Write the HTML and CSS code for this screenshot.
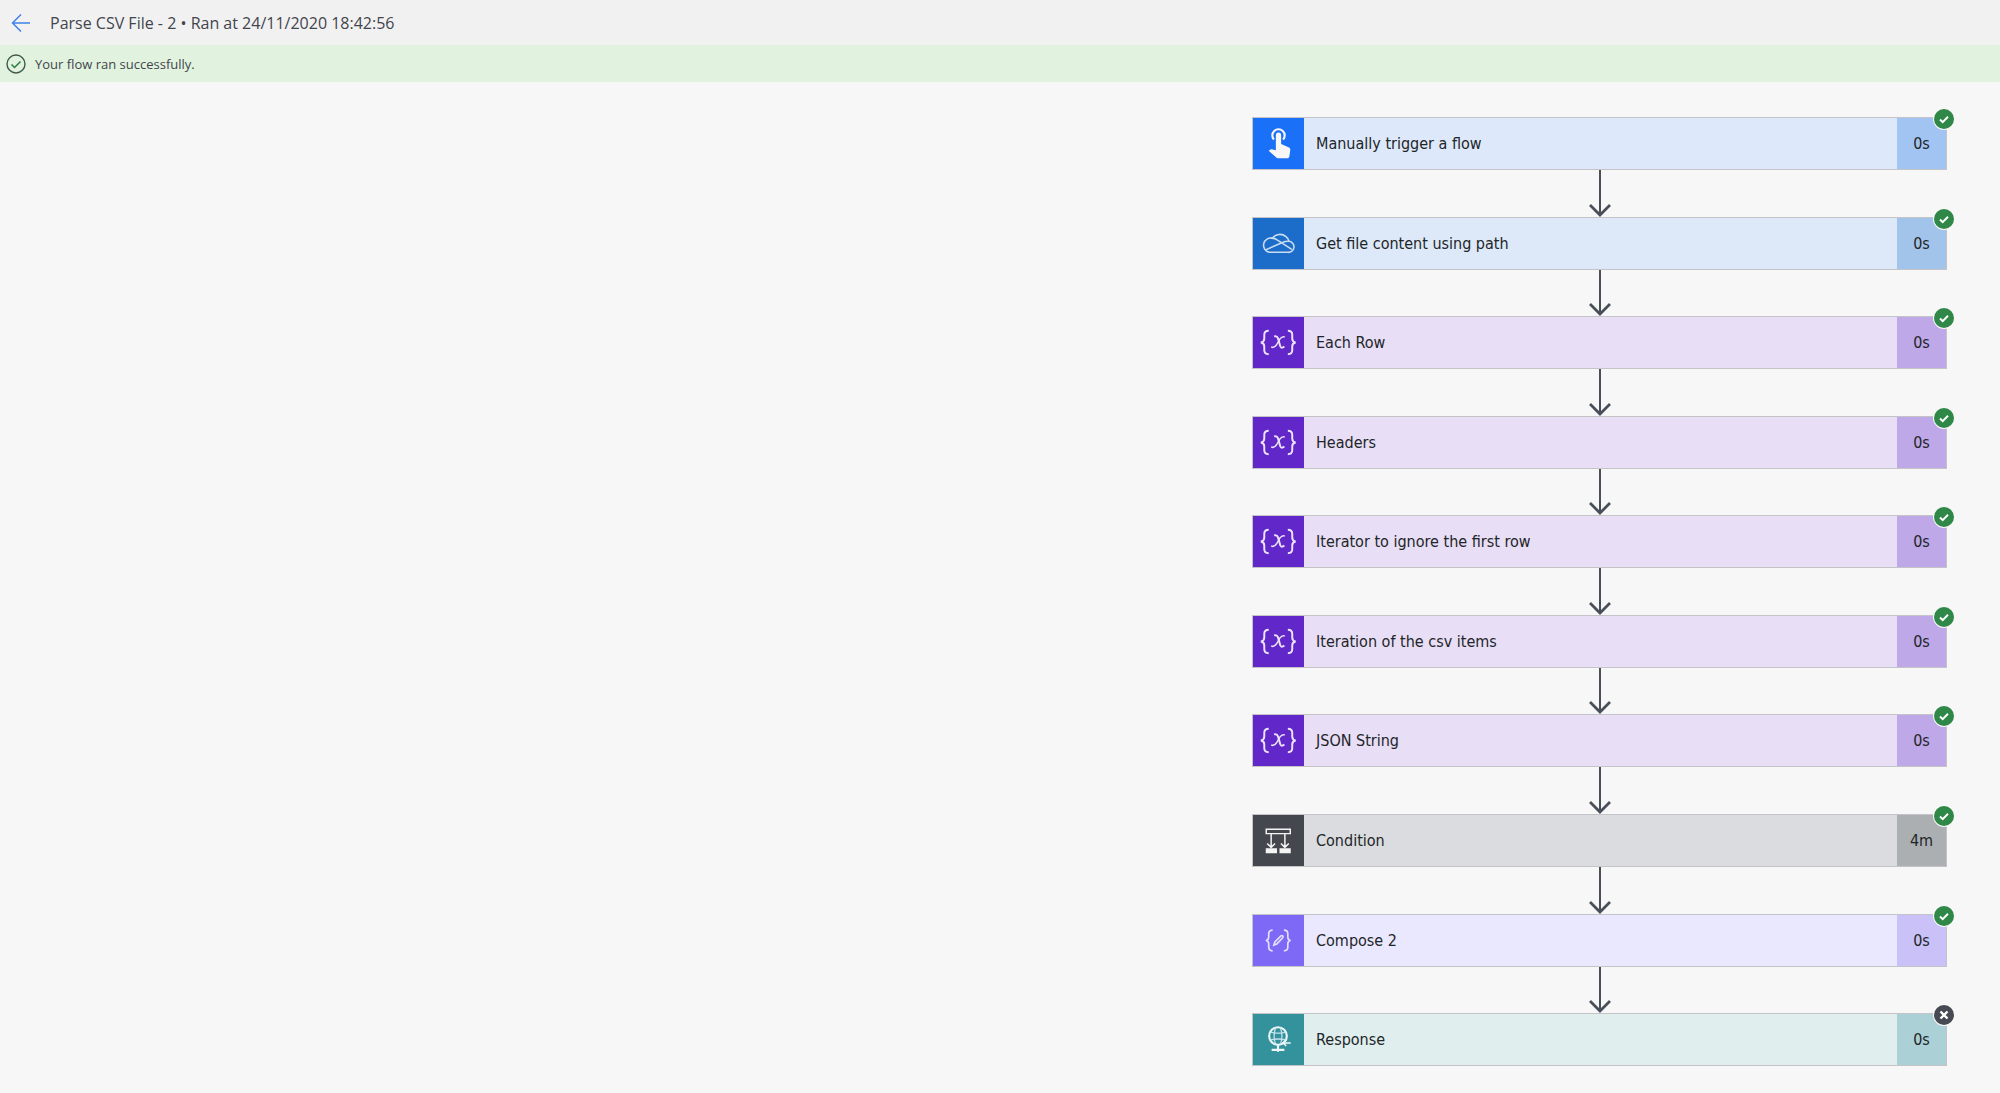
FILE: index.html
```html
<!DOCTYPE html>
<html lang="en">
<head>
<meta charset="utf-8">
<title>Parse CSV File - 2</title>
<link rel="stylesheet" href="styles.css">
</head>
<body>
<svg class="sprite" aria-hidden="true">
  <symbol id="ok" viewBox="0 0 20 20"><path d="M6 10.500l2.700 2.600L14 7.800" fill="none" stroke="#fff" stroke-width="2"/></symbol>
  <symbol id="fail" viewBox="0 0 20 20"><path d="M6.500 6.500l7 7M13.500 6.500l-7 7" fill="none" stroke="#fff" stroke-width="2.400"/></symbol>
  <symbol id="arrow" viewBox="0 0 24 14"><path d="M2 2l10 10L22 2" fill="none" stroke="#484f58" stroke-width="2.800"/></symbol>
  <symbol id="touch" viewBox="0 0 52 52">
    <path d="M21.300 22a6.300 6.300 0 1 1 9.400 0" fill="none" stroke="#f7f7f7" stroke-width="2.200"/>
    <path d="M23.300 17.500a2.700 2.700 0 0 1 5.400 0v9l8 3.600q1.500.6 1.300 2.400l-.9 6.500q-.3 2-2 2H25.500q-1.200 0-2-.9L16 33.500l1.400-1.200q.7-.6 1.600-.4l4.300 1.100z" fill="#f7f7f7"/>
  </symbol>
  <symbol id="cloud" viewBox="0 0 52 52">
    <g fill="none" stroke="#c9dcf2" stroke-width="1.600" stroke-linejoin="round">
      <path d="M16.500 35h19a5.600 5.600 0 0 0 1.300-11.200 8.500 8.500 0 0 0-3.200-4.800 9.500 9.500 0 0 0-13.800 1.600A7.300 7.300 0 0 0 16.500 35z"/>
      <path d="M12.800 32.500L30 25q3.500-1.600 6.800-1.200M18 20.600q3.800-.5 7 1.900L39.500 32"/>
    </g>
  </symbol>
  <symbol id="variable" viewBox="0 0 52 52">
    <g fill="none" stroke="#ece2fa" stroke-width="2">
      <path d="M16 14q-4.500 0-4.500 4v4q0 3.500-3.500 4 3.500.5 3.500 4v4q0 4 4.500 4M35.500 14q4.500 0 4.500 4v4q0 3.500 3.500 4-3.500.5-3.500 4v4q0 4-4.500 4"/>
      <path d="M21.500 19.800q3-.9 4 2l2.300 8q1 2.800 4.200.2"/><path d="M32.500 20.500q-2.500-1.500-5 1.800L24 28.300q-2.500 3.800-5.500 2.200" stroke-width="1.500"/>
    </g>
  </symbol>
  <symbol id="condition" viewBox="0 0 52 52">
    <g fill="none" stroke="#f4f4f4" stroke-width="1.500"><path d="M13.500 14.500h24.500v4.500H13.500zM18.500 19v14M32.500 19v14M14.500 29l4 4 4-4M28.500 29l4 4 4-4"/></g>
    <path d="M13 34h11.500v5H13zM27 34h11.500v5H27z" fill="#f4f4f4"/>
  </symbol>
  <symbol id="compose" viewBox="0 0 52 52">
    <g fill="none" stroke="#e4dffe" stroke-width="1.700">
      <path d="M20 15.500q-4 0-4 3.500v3.500q0 3-2.800 3.500 2.800.5 2.800 3.500V33q0 3.500 4 3.500M31.500 15.500q4 0 4 3.500v3.500q0 3 2.800 3.500-2.800.5-2.800 3.500V33q0 3.500-4 3.500"/>
      <path d="M21.300 30.700l1-3.200 6.200-6.200q1-.8 1.800 0 .8.900 0 1.900l-6 6.300z"/>
    </g>
  </symbol>
  <symbol id="globe" viewBox="0 0 52 52">
    <g fill="none" stroke="#eef7f7">
      <circle cx="25.500" cy="22.500" r="9" stroke-width="2.200"/>
      <path d="M17 18.500q8.500 2 17 0M17 26.500q8.500-2 17 0M23 14q-3 8.500 0 17M28 14q3 8.500 0 17" stroke="#c5e2ee" stroke-width="1.300"/>
      <path d="M25.500 32v6.500M19 36.500h13" stroke-width="2.200"/><path d="M30.500 29.500h8M34 26.500l-3.500 3 3.500 3" stroke-width="1.500"/>
    </g>
  </symbol>
</svg>
<header class="topbar">
  <a class="back" href="#" aria-label="Back">
    <svg width="20" height="20" viewBox="0 0 20 20"><path d="M19 10H2M10 1.500L1.500 10l8.500 8.500" fill="none" stroke="#3f82e8" stroke-width="1.500"/></svg>
  </a>
  <h1 class="title">Parse CSV File - 2 • Ran at 24/11/2020 18:42:56</h1>
</header>
<div class="notice" role="status">
  <svg width="20" height="20" viewBox="0 0 20 20"><circle cx="10" cy="10" r="9" fill="none" stroke="#3f5a4a" stroke-width="1.400"/><path d="M5.500 10.500l3 3 6-6" fill="none" stroke="#2c7a44" stroke-width="1.500"/></svg>
  <span>Your flow ran successfully.</span>
</div>
<main class="canvas">
  <ol class="flow">
    <li class="step trigger"><svg class="icon"><use href="#touch"/></svg><span class="name">Manually trigger a flow</span><span class="time">0s</span><svg class="badge"><use href="#ok"/></svg></li>
    <li class="link" aria-hidden="true"><svg class="head"><use href="#arrow"/></svg></li>
    <li class="step drive"><svg class="icon"><use href="#cloud"/></svg><span class="name">Get file content using path</span><span class="time">0s</span><svg class="badge"><use href="#ok"/></svg></li>
    <li class="link" aria-hidden="true"><svg class="head"><use href="#arrow"/></svg></li>
    <li class="step variable"><svg class="icon"><use href="#variable"/></svg><span class="name">Each Row</span><span class="time">0s</span><svg class="badge"><use href="#ok"/></svg></li>
    <li class="link" aria-hidden="true"><svg class="head"><use href="#arrow"/></svg></li>
    <li class="step variable"><svg class="icon"><use href="#variable"/></svg><span class="name">Headers</span><span class="time">0s</span><svg class="badge"><use href="#ok"/></svg></li>
    <li class="link" aria-hidden="true"><svg class="head"><use href="#arrow"/></svg></li>
    <li class="step variable"><svg class="icon"><use href="#variable"/></svg><span class="name">Iterator to ignore the first row</span><span class="time">0s</span><svg class="badge"><use href="#ok"/></svg></li>
    <li class="link" aria-hidden="true"><svg class="head"><use href="#arrow"/></svg></li>
    <li class="step variable"><svg class="icon"><use href="#variable"/></svg><span class="name">Iteration of the csv items</span><span class="time">0s</span><svg class="badge"><use href="#ok"/></svg></li>
    <li class="link" aria-hidden="true"><svg class="head"><use href="#arrow"/></svg></li>
    <li class="step variable"><svg class="icon"><use href="#variable"/></svg><span class="name">JSON String</span><span class="time">0s</span><svg class="badge"><use href="#ok"/></svg></li>
    <li class="link" aria-hidden="true"><svg class="head"><use href="#arrow"/></svg></li>
    <li class="step condition"><svg class="icon"><use href="#condition"/></svg><span class="name">Condition</span><span class="time">4m</span><svg class="badge"><use href="#ok"/></svg></li>
    <li class="link" aria-hidden="true"><svg class="head"><use href="#arrow"/></svg></li>
    <li class="step compose"><svg class="icon"><use href="#compose"/></svg><span class="name">Compose 2</span><span class="time">0s</span><svg class="badge"><use href="#ok"/></svg></li>
    <li class="link" aria-hidden="true"><svg class="head"><use href="#arrow"/></svg></li>
    <li class="step response"><svg class="icon"><use href="#globe"/></svg><span class="name">Response</span><span class="time">0s</span><svg class="badge skipped"><use href="#fail"/></svg></li>
  </ol>
</main>
</body>
</html>
```
FILE: styles.css
```css
* { box-sizing: border-box; }

body {
  margin: 0;
  min-height: 100vh;
  display: flex;
  flex-direction: column;
  background: #f7f7f7;
  color: #222528;
  font-family: "Open Sans", "Noto Sans", sans-serif;
}

.sprite { position: absolute; width: 0; height: 0; }

.topbar {
  display: flex;
  align-items: center;
  gap: 19px;
  height: 45px;
  padding: 0 11px;
  background: #f2f1f2;
}

.back { display: flex; }

.title {
  margin: 0;
  font-size: 16px;
  line-height: 24px;
  font-weight: 400;
  color: #41454c;
}

.notice {
  display: flex;
  align-items: center;
  gap: 9px;
  height: 37px;
  padding: 0 6px;
  background: #e1f3df;
  font-size: 13px;
  color: #41454c;
}

.canvas {
  flex: 1;
  display: flex;
  justify-content: flex-end;
  padding: 35px 53px 27px;
}

.flow {
  display: flex;
  flex-direction: column;
  width: 695px;
  max-width: 100%;
  margin: 0;
  padding: 0;
  list-style: none;
}

.step {
  position: relative;
  display: flex;
  height: 53px;
  border: 1px solid #c4c4c8;
  font-family: "DejaVu Sans Condensed", "Noto Sans", sans-serif;
  font-size: 16px;
  line-height: 52px;
}

.icon { width: 51px; height: 51px; }
.name { flex: 1; padding-left: 12px; }
.time { width: 49px; text-align: center; }

.badge {
  position: absolute;
  top: -9px;
  right: -8px;
  width: 20px;
  height: 20px;
  border-radius: 50%;
  background: #2f8748;
  box-shadow: 0 0 0 1px #f7f7f7;
}

.badge.skipped { background: #464b53; }

.link {
  flex: 1;
  min-height: 30px;
  display: flex;
  flex-direction: column;
  align-items: center;
}

.link::before {
  content: "";
  flex: 1;
  width: 2px;
  margin-bottom: -13px;
  background: #484f58;
}

.head { width: 24px; height: 14px; }

.step .time { height: 51px; }

.trigger { background: #dde9fb; }
.trigger .icon { background: #1a70f7; }
.trigger .time { background: #a2c4f2; }
.drive { background: #dde9f9; }
.drive .icon { background: #1c6dc9; }
.drive .time { background: #a2c4ea; }
.variable { background: #e8def6; }
.variable .icon { background: #6127c9; }
.variable .time { background: #bea8e8; }
.condition { background: #dbdcdf; }
.condition .icon { background: #44484e; }
.condition .time { background: #abafb2; }
.compose { background: #eae8fe; }
.compose .icon { background: #7e69f7; }
.compose .time { background: #c9c1f8; }
.response { background: #e0eeee; }
.response .icon { background: #33929b; }
.response .time { background: #abd1d6; }
```
